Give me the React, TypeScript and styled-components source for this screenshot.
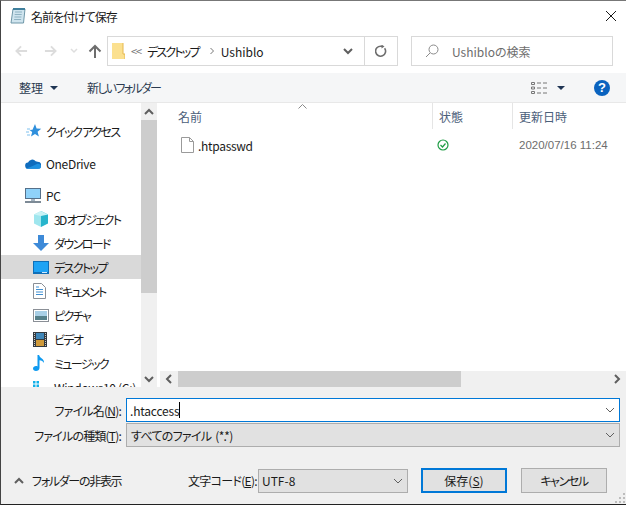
import React from "react"
import styled, { createGlobalStyle } from "styled-components"

const navItems = [
  { label: "デスクトップ", icon: "desktop", selected: true, tight: true },
  { label: "ドキュメント", icon: "docs", tight: true },
  { label: "ピクチャ", icon: "pics", tight: true },
  { label: "ビデオ", icon: "video", tight: true },
  { label: "ミュージック", icon: "music", tight: true },
  { label: "Windows10 (C:)", icon: "drive" },
]

const NavIcon: React.FC<{ kind: string }> = ({ kind }) => {
  switch (kind) {
    case "star":
      return (
        <svg width="16" height="16" viewBox="0 0 16 16">
          <path d="M9 1l1.600 4.600 4.600.2-3.600 3 1.300 4.800L9 11l-4 2.600 1.200-4.700-2.700-2 3-.2z" fill="#2f8fdc" />
          <path d="M1 6h3M0 9h3M1 12h3" stroke="#7cc0ee" />
        </svg>
      )
    case "cloud":
      return (
        <svg width="16" height="11" viewBox="0 0 18 12">
          <path d="M4 12a3.500 3.500 0 0 1-.6-7A5 5 0 0 1 12 3.400a3.800 3.800 0 0 1 2 .6A4 4 0 0 1 14.500 12z" fill="#0f6cbd" />
          <path d="M1 12h14a3 3 0 0 0 3-3 3 3 0 0 0-4-2.600L8 9z" fill="#1e90e0" />
        </svg>
      )
    case "pc":
      return (
        <svg width="17" height="15" viewBox="0 0 17 15">
          <rect x="0.5" y="0.5" width="15" height="10" fill="#8fd2fa" stroke="#55708a" />
          <rect x="6" y="11" width="4" height="2" fill="#a5b4c2" />
          <path d="M0 14h16" stroke="#7d8a96" strokeWidth="2" />
        </svg>
      )
    case "cube":
      return (
        <svg width="16" height="16" viewBox="0 0 16 16">
          <path d="M8 0l7 3.500v9L8 16z" fill="#27b5cc" />
          <path d="M8 0L1 3.500v9L8 16z" fill="#9fe6ee" />
          <path d="M8 5l7-1.500L8 0 1 3.500z" fill="#c9f2f5" />
        </svg>
      )
    case "down":
      return (
        <svg width="16" height="16" viewBox="0 0 16 16">
          <path d="M5 0h6v8h5l-8 8-8-8h5z" fill="#3d8ad8" />
        </svg>
      )
    case "desktop":
      return (
        <svg width="16" height="13" viewBox="0 0 16 13">
          <rect width="16" height="13" fill="#0f6fb8" />
          <rect x="1" y="1" width="14" height="10" fill="#1ea3f5" />
          <path d="M9 11.500h5" stroke="#cfeaff" />
        </svg>
      )
    case "docs":
      return (
        <svg width="13" height="16" viewBox="0 0 13 16">
          <path d="M.5.5h8l4 4v11H.5z" fill="#fff" stroke="#8a8f96" />
          <path d="M3 4h3M3 6.500h7M3 9h7M3 11.500h7" stroke="#3f8fd2" />
        </svg>
      )
    case "pics":
      return (
        <svg width="16" height="13" viewBox="0 0 16 13">
          <rect x="0.5" y="0.5" width="15" height="12" fill="#fff" stroke="#8a8f96" />
          <rect x="2" y="2" width="12" height="5" fill="#a8cfe6" />
          <rect x="2" y="7" width="12" height="4" fill="#55808a" />
        </svg>
      )
    case "video":
      return (
        <svg width="14" height="15" viewBox="0 0 14 15">
          <rect width="14" height="15" fill="#343a40" />
          <rect x="3" y="1" width="8" height="6" fill="#3f86b8" />
          <rect x="3" y="8" width="8" height="6" fill="#d09a3a" />
          <path d="M1.500 1v13M12.500 1v13" stroke="#c8c8c8" strokeDasharray="1 1" />
        </svg>
      )
    case "music":
      return (
        <svg width="12" height="16" viewBox="0 0 12 16">
          <path d="M4.500 0h1.600c.3 3 5.400 3.600 4.900 8-.8-1.800-2.500-2.600-4.500-2.800V13c0 1.800-1.700 3-3.500 3C1.200 16 0 15 0 13.600c0-1.500 1.500-2.600 3-2.600.6 0 1.100.1 1.500.4z" fill="#0f9af0" />
        </svg>
      )
    default:
      return (
        <svg width="14" height="14" viewBox="0 0 14 14">
          <path d="M0 1h2.500v2.500H0zM3.500 1H6v2.500H3.500zM0 4.500h2.500V7H0zM3.500 4.500H6V7H3.500z" fill="#12b0e8" />
        </svg>
      )
  }
}

const Chevron: React.FC<{ dir?: "up" | "down" | "left" | "right"; bold?: boolean }> = ({ dir = "down", bold }) => {
  const d = {
    down: "M1 3l4 4 4-4",
    up: "M1 7l4-4 4 4",
    left: "M7 1L3 5l4 4",
    right: "M3 1l4 4-4 4",
  }[dir]
  return (
    <svg width="10" height="10" viewBox="0 0 10 10">
      <path d={d} fill="none" stroke={bold ? "#5f5f5f" : "#606060"} strokeWidth={bold ? 2 : 1} />
    </svg>
  )
}

const App: React.FC<{}> = ({}) => {
  return (
    <Dialog>
      <GlobalStyle />
      <TitleBar>
        <svg width="16" height="16" viewBox="0 0 16 16">
          <path d="M3 1h12l-1.500 14H1z" fill="#cfe4ee" stroke="#6f97a8" />
          <path d="M5 4h7M4.700 6.500h7M4.400 9h7M4.100 11.500h7" stroke="#8fb2c2" />
          <path d="M3 1h12" stroke="#3f7f9c" strokeWidth="2" />
        </svg>
        <TitleText>名前を付けて保存</TitleText>
        <CloseIcon width="12" height="12" viewBox="0 0 12 12">
          <path d="M1 1l10 10M11 1L1 11" stroke="#1a1a1a" />
        </CloseIcon>
      </TitleBar>

      <NavBar>
        <NavButtons>
          <svg width="13" height="12" viewBox="0 0 14 12">
            <path d="M13 6H2M6.500 1L1.500 6l5 5" fill="none" stroke="#dcdcdc" strokeWidth="2" />
          </svg>
          <svg width="13" height="12" viewBox="0 0 14 12">
            <path d="M1 6h11M7.500 1l5 5-5 5" fill="none" stroke="#dcdcdc" strokeWidth="2" />
          </svg>
          <svg width="8" height="6" viewBox="0 0 8 6">
            <path d="M1 1l3 3 3-3" fill="none" stroke="#dedede" strokeWidth="1.500" />
          </svg>
          <svg width="14" height="14" viewBox="0 0 14 14">
            <path d="M7 14V2M1.500 7.500L7 2l5.500 5.500" fill="none" stroke="#6d6d6d" strokeWidth="2" />
          </svg>
        </NavButtons>
        <AddressBox>
          <svg width="13" height="16" viewBox="0 0 13 16">
            <path d="M0 0h11v11h2v5H0z" fill="#fbe08f" />
            <path d="M11 0v11h2v5" fill="none" stroke="#e5b84f" />
          </svg>
          <BreadcrumbMark>&lt;&lt;</BreadcrumbMark>
          <KanaCrumb>デスクトップ</KanaCrumb>
          <CrumbArrow>
            <svg width="6" height="8" viewBox="0 0 6 8">
              <path d="M1.500 1l3 3-3 3" fill="none" stroke="#777" />
            </svg>
          </CrumbArrow>
          <Crumb>Ushiblo</Crumb>
          <AddressDrop>
            <Chevron bold />
          </AddressDrop>
          <RefreshCell>
            <svg width="12" height="12" viewBox="0 0 12 12">
              <path d="M9.600 3.200A5 5 0 1 1 6 1.200H7" fill="none" stroke="#6e6e6e" strokeWidth="1.600" />
              <path d="M6.500 -0.500l3 2-3 2z" fill="#6e6e6e" />
            </svg>
          </RefreshCell>
        </AddressBox>
        <SearchBox>
          <svg width="14" height="14" viewBox="0 0 14 14">
            <circle cx="8.500" cy="5.500" r="4.500" fill="none" stroke="#8a8a8a" />
            <path d="M5 9l-4 4" stroke="#8a8a8a" />
          </svg>
          <SearchText>Ushibloの検索</SearchText>
        </SearchBox>
      </NavBar>

      <Toolbar>
        <ToolItem>整理</ToolItem>
        <DownCaret />
        <NewFolder>新しいフォルダー</NewFolder>
        <ViewIcon width="16" height="14" viewBox="0 0 16 14">
          <path d="M.5 1.500h3v2h-3zM.5 6h3v2h-3zM.5 10.500h3v2h-3z" fill="none" stroke="#777" />
          <path d="M6 2h4M12 2h4M6 7h4M12 7h4M6 12h4M12 12h4" stroke="#777" />
        </ViewIcon>
        <DownCaret />
        <HelpIcon>?</HelpIcon>
      </Toolbar>

      <Content>
        <Sidebar>
          <NavRow $indent={26} $group>
            <NavIconSlot $slot={20}><NavIcon kind="star" /></NavIconSlot>
            <NavLabel $tight>クイック アクセス</NavLabel>
          </NavRow>
          <NavRow $indent={25} $group>
            <NavIconSlot><NavIcon kind="cloud" /></NavIconSlot>
            <NavLabel>OneDrive</NavLabel>
          </NavRow>
          <NavRow $indent={25}>
            <NavIconSlot><NavIcon kind="pc" /></NavIconSlot>
            <NavLabel>PC</NavLabel>
          </NavRow>
          <NavRow $indent={33}>
            <NavIconSlot><NavIcon kind="cube" /></NavIconSlot>
            <NavLabel $tight>3D オブジェクト</NavLabel>
          </NavRow>
          <NavRow $indent={33}>
            <NavIconSlot><NavIcon kind="down" /></NavIconSlot>
            <NavLabel $tight>ダウンロード</NavLabel>
          </NavRow>
          {navItems.map(item => (
            <NavRow key={item.label} $indent={33} $selected={item.selected}>
              <NavIconSlot><NavIcon kind={item.icon} /></NavIconSlot>
              <NavLabel $tight={item.tight}>{item.label}</NavLabel>
            </NavRow>
          ))}
        </Sidebar>
        <VScroll>
          <ScrollArrow><Chevron dir="up" bold /></ScrollArrow>
          <VThumb />
          <VTrack />
          <ScrollArrow><Chevron dir="down" bold /></ScrollArrow>
        </VScroll>
        <Main>
          <ListHeader>
            <SortCaret width="9" height="5" viewBox="0 0 9 5">
              <path d="M.5 4.500l4-4 4 4" fill="none" stroke="#8a8a8a" />
            </SortCaret>
            <HeaderCell>名前</HeaderCell>
            <HeaderCell>状態</HeaderCell>
            <HeaderCell>更新日時</HeaderCell>
          </ListHeader>
          <FileRow>
            <NameCell>
              <svg width="13" height="16" viewBox="0 0 13 16">
                <path d="M.5.5h8l4 4v11H.5zM8.500.5v4h4" fill="#fff" stroke="#9a9a9a" />
              </svg>
              <FileName>.htpasswd</FileName>
            </NameCell>
            <StatusCell>
              <svg width="12" height="12" viewBox="0 0 12 12">
                <circle cx="6" cy="6" r="5" fill="none" stroke="#1f9d45" strokeWidth="1.200" />
                <path d="M3.500 6l2 2 3-3.500" fill="none" stroke="#1f9d45" strokeWidth="1.200" />
              </svg>
            </StatusCell>
            <DateCell>2020/07/16 11:24</DateCell>
          </FileRow>
          <FileSpacer />
          <HScroll>
            <HArrow><Chevron dir="left" bold /></HArrow>
            <HThumb />
            <HTrack />
            <HArrow><Chevron dir="right" bold /></HArrow>
          </HScroll>
        </Main>
      </Content>

      <Footer>
        <FieldRow>
          <FieldLabel>ファイル名(<u>N</u>):</FieldLabel>
          <NameField>
            <NameValue>.htaccess</NameValue>
            <Caret />
            <FieldChevron><Chevron /></FieldChevron>
          </NameField>
        </FieldRow>
        <FieldRow>
          <FieldLabel>ファイルの種類(<u>T</u>):</FieldLabel>
          <TypeField>
            すべてのファイル&nbsp;&nbsp;(*.*)
            <FieldChevron><Chevron /></FieldChevron>
          </TypeField>
        </FieldRow>
        <ActionRow>
          <FolderToggle>
            <Chevron dir="up" bold />
            <ToggleText>フォルダーの非表示</ToggleText>
          </FolderToggle>
          <CharsetLabel>文字コード(<u>E</u>):</CharsetLabel>
          <CharsetField>
            UTF-8
            <FieldChevron><Chevron /></FieldChevron>
          </CharsetField>
          <ActionButton $primary>保存(<u>S</u>)</ActionButton>
          <ActionButton $tight>キャンセル</ActionButton>
        </ActionRow>
        <Grip width="10" height="10" viewBox="0 0 10 10">
          <path d="M8 0h2v2H8zM4 4h2v2H4zM8 4h2v2H8zM0 8h2v2H0zM4 8h2v2H4zM8 8h2v2H8z" fill="#bdbdbd" />
        </Grip>
      </Footer>
    </Dialog>
  )
}

const GlobalStyle = createGlobalStyle`
  html, body {
    margin: 0;
    padding: 0;
    background: #fff;
  }
  body {
    font-family: "Noto Sans CJK JP", "Liberation Sans", sans-serif;
    font-size: 12px;
    font-feature-settings: "palt";
    color: #1a1a1a;
  }
`

const Dialog = styled.div`
  width: 626px;
  height: 505px;
  box-sizing: border-box;
  border-left: 1px solid #444;
  border-top: 1px solid #777;
  border-bottom: 1px solid #222;
  display: flex;
  flex-direction: column;
  overflow: hidden;
  position: relative;
`

const TitleBar = styled.div`
  height: 30px;
  flex: none;
  display: flex;
  align-items: center;
  padding: 0 8px 0 9px;
`

const TitleText = styled.div`
  margin-left: 5px;
  font-size: 12px;
  line-height: 17px;
  letter-spacing: -1px;
`

const CloseIcon = styled.svg`
  margin-left: auto;
  margin-right: 1px;
`

const NavBar = styled.div`
  height: 42px;
  flex: none;
  display: flex;
  align-items: flex-start;
  padding-top: 5px;
  box-sizing: border-box;
`

const NavButtons = styled.div`
  width: 106px;
  height: 30px;
  display: flex;
  align-items: center;
  padding-left: 14px;
  gap: 16px;
  box-sizing: border-box;
  svg:nth-child(3) {
    margin-left: -3px;
  }
  svg:nth-child(4) {
    margin-left: -6px;
  }
`

const AddressBox = styled.div`
  width: 291px;
  height: 30px;
  box-sizing: border-box;
  border: 1px solid #d9d9d9;
  display: flex;
  align-items: center;
  padding-left: 4px;
`

const BreadcrumbMark = styled.span`
  margin-left: 6px;
  color: #777;
  font-size: 11px;
  letter-spacing: -1px;
  width: 14px;
`

const Crumb = styled.span`
  margin-left: 2px;
`

const KanaCrumb = styled(Crumb)`
  letter-spacing: -1.8px;
`

const CrumbArrow = styled.span`
  display: flex;
  margin: 0 4px 0 10px;
`

const AddressDrop = styled.div`
  margin-left: auto;
  width: 32px;
  display: flex;
  justify-content: center;
`

const RefreshCell = styled.div`
  width: 32px;
  height: 28px;
  border-left: 1px solid #d9d9d9;
  display: flex;
  align-items: center;
  justify-content: center;
`

const SearchBox = styled.div`
  width: 202px;
  height: 30px;
  margin-left: 13px;
  box-sizing: border-box;
  border: 1px solid #d9d9d9;
  display: flex;
  align-items: center;
  padding-left: 13px;
`

const SearchText = styled.span`
  margin-left: 13px;
  color: #6d6d6d;
`

const Toolbar = styled.div`
  height: 30px;
  flex: none;
  background: #f5f6f7;
  border-bottom: 1px solid #e8e8e8;
  display: flex;
  align-items: center;
  padding-left: 18px;
  box-sizing: border-box;
`

const ToolItem = styled.span`
  color: #2b3a50;
`

const DownCaret = styled.span`
  margin-left: 7px;
  border-left: 4px solid transparent;
  border-right: 4px solid transparent;
  border-top: 4px solid #1f3554;
`

const NewFolder = styled.span`
  margin-left: 29px;
  color: #2b3a50;
  letter-spacing: -1.7px;
`

const ViewIcon = styled.svg`
  margin-left: auto;
  margin-right: 3px;
`

const HelpIcon = styled.span`
  width: 16px;
  height: 16px;
  margin: 0 16px 0 29px;
  border-radius: 50%;
  background: #0a63bf;
  color: #fff;
  font: bold 13px/16px "Liberation Sans", sans-serif;
  text-align: center;
`

const Content = styled.div`
  flex: none;
  height: 284px;
  display: flex;
  overflow: hidden;
`

const Sidebar = styled.div`
  width: 140px;
  flex: none;
  padding-top: 16px;
  box-sizing: border-box;
  overflow: hidden;
`

const NavRow = styled.div<{ $indent: number; $group?: boolean; $selected?: boolean }>`
  height: 24px;
  display: flex;
  align-items: center;
  white-space: nowrap;
  padding-left: ${p => p.$indent - 1}px;
  margin-bottom: ${p => (p.$group ? 8 : 0)}px;
  background: ${p => (p.$selected ? "#d9d9d9" : "transparent")};
`

const NavLabel = styled.span<{ $tight?: boolean }>`
  letter-spacing: ${p => (p.$tight ? -1.6 : -0.3)}px;
`

const NavIconSlot = styled.span<{ $slot?: number }>`
  width: ${p => p.$slot ?? 21}px;
  flex: none;
  display: flex;
  align-items: center;
`

const VScroll = styled.div`
  width: 16px;
  flex: none;
  background: #f0f0f0;
  display: flex;
  flex-direction: column;
`

const ScrollArrow = styled.div`
  height: 17px;
  flex: none;
  display: flex;
  align-items: center;
  justify-content: center;
`

const VThumb = styled.div`
  height: 173px;
  flex: none;
  background: #cdcdcd;
`

const VTrack = styled.div`
  flex: 1;
`

const Main = styled.div`
  flex: 1;
  margin-left: 3px;
  display: flex;
  flex-direction: column;
  min-width: 0;
`

const ListHeader = styled.div`
  height: 26px;
  flex: none;
  display: grid;
  grid-template-columns: 273px 80px 1fr;
  position: relative;
`

const SortCaret = styled.svg`
  position: absolute;
  left: 138px;
  top: 1px;
`

const HeaderCell = styled.div`
  display: flex;
  align-items: center;
  padding-left: 18px;
  color: #4c607a;
  border-right: 1px solid #e5e5e5;
  &:nth-of-type(2) {
    padding-left: 6px;
  }
  &:last-child {
    padding-left: 6px;
    border-right: none;
  }
`

const FileRow = styled.div`
  height: 26px;
  margin-top: 3px;
  flex: none;
  display: grid;
  grid-template-columns: 273px 80px 1fr;
  align-items: center;
`

const NameCell = styled.div`
  padding-left: 21px;
  display: flex;
  align-items: center;
  gap: 4px;
`

const FileName = styled.span`
  letter-spacing: -0.3px;
`

const StatusCell = styled.div`
  padding-left: 4px;
  display: flex;
`

const DateCell = styled.div`
  padding-left: 6px;
  color: #6d6d6d;
  font-family: "Liberation Sans", sans-serif;
  font-size: 11.5px;
  white-space: nowrap;
`

const FileSpacer = styled.div`
  flex: 1;
`

const HScroll = styled.div`
  height: 16px;
  flex: none;
  background: #f0f0f0;
  display: flex;
`

const HArrow = styled.div`
  width: 18px;
  flex: none;
  display: flex;
  align-items: center;
  justify-content: center;
`

const HThumb = styled.div`
  width: 283px;
  flex: none;
  background: #cdcdcd;
`

const HTrack = styled.div`
  flex: 1;
`

const Footer = styled.div`
  flex: 1;
  background: #f0f0f0;
  padding-top: 11px;
  display: flex;
  flex-direction: column;
  gap: 1px;
  position: relative;
`

const FieldRow = styled.div`
  display: flex;
  align-items: center;
  height: 24px;
  padding-right: 6px;
`

const FieldLabel = styled.label`
  width: 120px;
  flex: none;
  text-align: right;
  white-space: nowrap;
  letter-spacing: -0.8px;
`

const NameField = styled.div`
  flex: 1;
  margin-left: 5px;
  height: 24px;
  box-sizing: border-box;
  border: 1px solid #0078d7;
  background: #fff;
  display: flex;
  align-items: center;
  padding-left: 3px;
`

const NameValue = styled.span`
  letter-spacing: -0.2px;
`

const Caret = styled.span`
  width: 1px;
  height: 16px;
  background: #000;
`

const TypeField = styled.div`
  flex: 1;
  margin-left: 5px;
  height: 24px;
  box-sizing: border-box;
  border: 1px solid #adadad;
  background: #e1e1e1;
  display: flex;
  align-items: center;
  padding-left: 4px;
  letter-spacing: -0.7px;
`

const FieldChevron = styled.span`
  margin-left: auto;
  margin-right: 3px;
  width: 12px;
  display: flex;
  justify-content: center;
`

const ActionRow = styled.div`
  display: flex;
  align-items: center;
  margin-top: 20px;
  height: 25px;
`

const FolderToggle = styled.div`
  width: 187px;
  flex: none;
  padding-left: 13px;
  box-sizing: border-box;
  display: flex;
  align-items: center;
  gap: 8px;
`

const ToggleText = styled.span`
  letter-spacing: -1.3px;
`

const CharsetLabel = styled.label`
  width: 70px;
  flex: none;
  white-space: nowrap;
  letter-spacing: -0.7px;
`

const CharsetField = styled.div`
  width: 150px;
  height: 24px;
  box-sizing: border-box;
  border: 1px solid #adadad;
  background: #e1e1e1;
  display: flex;
  align-items: center;
  padding-left: 3px;
`

const ActionButton = styled.button<{ $primary?: boolean; $tight?: boolean }>`
  width: 86px;
  height: 25px;
  padding: 0;
  margin-left: ${p => (p.$primary ? 13 : 14)}px;
  box-sizing: border-box;
  border: ${p => (p.$primary ? "2px solid #0078d7" : "1px solid #adadad")};
  background: #e1e1e1;
  font: inherit;
  font-feature-settings: "palt";
  color: #1a1a1a;
  letter-spacing: ${p => (p.$tight ? -1.4 : 0)}px;
`

const Grip = styled.svg`
  position: absolute;
  right: 1px;
  bottom: 1px;
`

export default App
